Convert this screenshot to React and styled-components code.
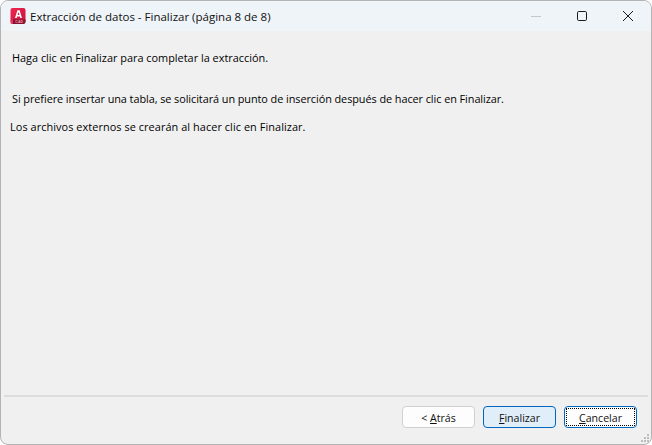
import React from 'react'
import styled, { createGlobalStyle } from 'styled-components'

const GlobalStyle = createGlobalStyle`
    html, body {
        margin: 0;
        padding: 0;
        background: #fff;
    }
    body {
        font-family: "Open Sans", "Noto Sans", "Liberation Sans", sans-serif;
        font-size: 10.9px;
        color: #000;
    }
`;

const AppIcon = () => (
    <svg width="16" height="17" viewBox="0 0 16 17">
        <defs>
            <linearGradient id="acad" x1="0" y1="0" x2="1" y2="1">
                <stop offset="0" stopColor="#f0284f" />
                <stop offset="1" stopColor="#c4123c" />
            </linearGradient>
        </defs>
        <rect x="0.5" y="0" width="15" height="15" rx="2" fill="url(#acad)" />
        <path d="M0.5 12 V14.5 Q0.5 16 2 16 H3.5 V12 Z" fill="#e8365c" />
        <path d="M3 11.5 H15.5 V14 Q15.5 16 13.5 16 H3 Z" fill="#8a0f30" />
        <text x="9.2" y="15" fontSize="3.6" fontFamily="Liberation Sans, sans-serif" fontWeight="700" fill="#e9a3b4" textAnchor="middle">CAD</text>
        <path d="M5 10 L7.4 2.2 H9.6 L12 10 H10.3 L9.9 8.4 H7.1 L6.7 10 Z M7.5 7 H9.5 L8.5 3.9 Z" fill="#fff" fillRule="evenodd" />
    </svg>
);

const MinimizeIcon = () => (
    <svg width="12" height="12" viewBox="0 0 12 12">
        <path d="M1 6.5 H11" stroke="#c4c8cc" strokeWidth="1" />
    </svg>
);

const MaximizeIcon = () => (
    <svg width="12" height="12" viewBox="0 0 12 12">
        <rect x="1.5" y="1.5" width="9" height="9" rx="1.2" fill="none" stroke="#1a1a1a" strokeWidth="1" />
    </svg>
);

const CloseIcon = () => (
    <svg width="12" height="12" viewBox="0 0 12 12">
        <path d="M1 1 L11 11 M11 1 L1 11" stroke="#1a1a1a" strokeWidth="1" />
    </svg>
);

const GripIcon = () => (
    <svg width="10" height="10" viewBox="0 0 10 10">
        <g fill="#bcbcbc">
            <rect x="7" y="1" width="2" height="2" />
            <rect x="4" y="4" width="2" height="2" />
            <rect x="7" y="4" width="2" height="2" />
            <rect x="1" y="7" width="2" height="2" />
            <rect x="4" y="7" width="2" height="2" />
            <rect x="7" y="7" width="2" height="2" />
        </g>
    </svg>
);

const App = () => {
    return (
        <>
            <GlobalStyle />
            <Wrapper>
                <TitleBar>
                    <TitleIcon><AppIcon /></TitleIcon>
                    <Title>Extracción de datos - Finalizar (página 8 de 8)</Title>
                    <WindowControls>
                        <WindowButton><MinimizeIcon /></WindowButton>
                        <WindowButton><MaximizeIcon /></WindowButton>
                        <WindowButton><CloseIcon /></WindowButton>
                    </WindowControls>
                </TitleBar>

                <Content>
                    <Message $top={19}>Haga clic en Finalizar para completar la extracción.</Message>
                    <Message $top={25} $spacing={-0.07}>Si prefiere insertar una tabla, se solicitará un punto de inserción después de hacer clic en Finalizar.</Message>
                    <Message $top={12} $left={9} $spacing={0.07}>Los archivos externos se crearán al hacer clic en Finalizar.</Message>
                </Content>

                <Separator />

                <Footer>
                    <Button>&lt; <u>A</u>trás</Button>
                    <Button $primary><u>F</u>inalizar</Button>
                    <Button $focused><u>C</u>ancelar</Button>
                </Footer>

                <Grip><GripIcon /></Grip>
            </Wrapper>
        </>
    )
}

const Wrapper = styled.div`
    position: relative;
    box-sizing: border-box;
    width: 652px;
    height: 445px;
    display: flex;
    flex-direction: column;
    background: #f0f0f0;
    border: 1px solid #b4b4b4;
    border-radius: 8px;
    overflow: hidden;
`;

const TitleBar = styled.div`
    height: 30px;
    flex-shrink: 0;
    display: flex;
    align-items: center;
    padding-left: 9px;
    background: #eff4f9;
`;

const TitleIcon = styled.div`
    width: 16px;
    height: 17px;
    margin-right: 4px;
    display: flex;
`;

const Title = styled.span`
    flex: 1;
    font-size: 11.5px;
    color: #111;
    white-space: nowrap;
`;

const WindowControls = styled.div`
    display: flex;
    height: 100%;
`;

const WindowButton = styled.div`
    width: 46px;
    display: flex;
    align-items: center;
    justify-content: center;
`;

const Content = styled.div`
    flex: 1;
    display: flex;
    flex-direction: column;
`;

const Message = styled.p`
    margin: ${(p) => p.$top}px 0 0 ${(p) => p.$left || 11}px;
    line-height: 16px;
    white-space: nowrap;
    letter-spacing: ${(p) => p.$spacing || 0}px;
`;

const Separator = styled.div`
    height: 2px;
    margin: 0 3px;
    background: #dcdcdc;
`;

const Footer = styled.div`
    height: 47px;
    box-sizing: border-box;
    display: flex;
    justify-content: flex-end;
    gap: 8px;
    padding: 9px 14px 0 0;
`;

const Button = styled.div`
    position: relative;
    box-sizing: border-box;
    width: 73px;
    height: 22px;
    padding-top: 1px;
    display: flex;
    align-items: center;
    justify-content: center;
    white-space: pre;
    border-radius: 4px;
    color: #111;
    font-size: 10.6px;
    background: ${(p) => (p.$primary ? '#e0eef9' : '#fdfdfd')};
    border: 1px solid ${(p) => (p.$primary || p.$focused ? '#0067c0' : '#d0d0d0')};

    ${(p) => p.$focused && `
        &::after {
            content: '';
            position: absolute;
            inset: 1px;
            border: 1px dotted #000;
        }
    `}
`;

const Grip = styled.div`
    position: absolute;
    right: 1px;
    bottom: 1px;
    width: 10px;
    height: 10px;
    display: flex;
`;

export default App
